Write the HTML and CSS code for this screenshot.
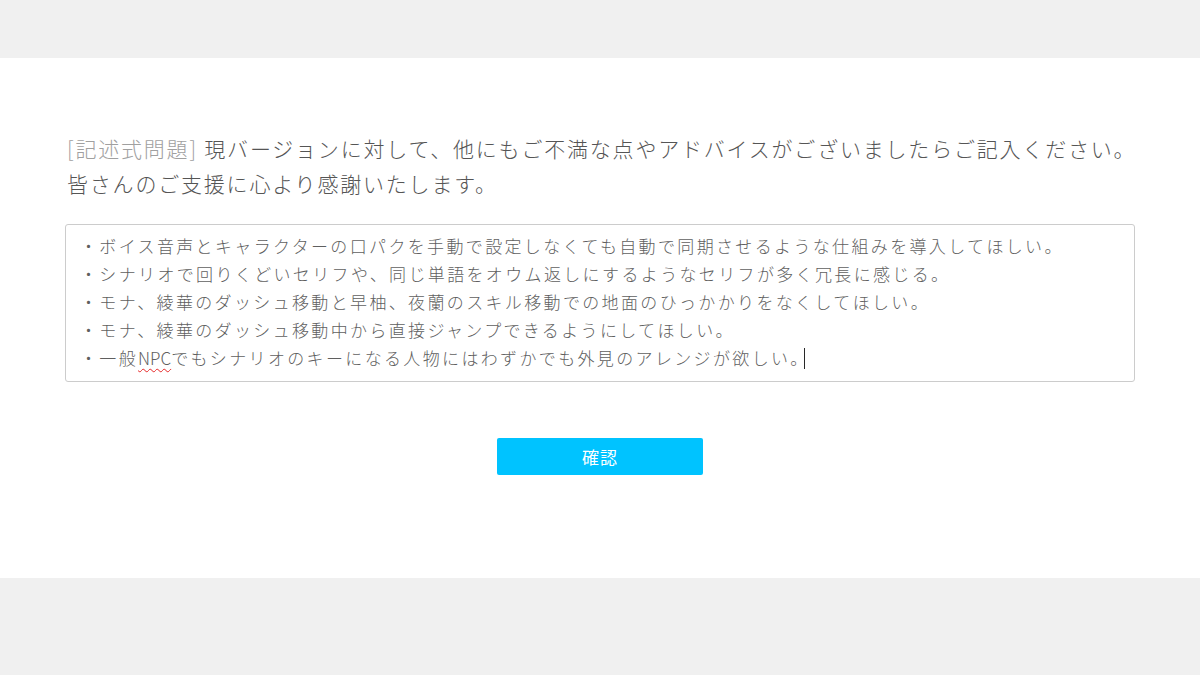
FILE: index.html
```html
<!DOCTYPE html>
<html>
  <head>
    <title>アンケート</title>
    <link rel="stylesheet" href="styles.css">
  </head>
  <body>
    <div class="top-band"></div>

    <div class="panel">
      <p class="question">
        <span class="question-tag">[記述式問題]</span> 現バージョンに対して、他にもご不満な点やアドバイスがございましたらご記入ください。<br>
        皆さんのご支援に心より感謝いたします。
      </p>

      <div class="answer-box">
        <p class="answer-line">・ボイス音声とキャラクターの口パクを手動で設定しなくても自動で同期させるような仕組みを導入してほしい。</p>
        <p class="answer-line">・シナリオで回りくどいセリフや、同じ単語をオウム返しにするようなセリフが多く冗長に感じる。</p>
        <p class="answer-line">・モナ、綾華のダッシュ移動と早柚、夜蘭のスキル移動での地面のひっかかりをなくしてほしい。</p>
        <p class="answer-line">・モナ、綾華のダッシュ移動中から直接ジャンプできるようにしてほしい。</p>
        <p class="answer-line">・一般<span class="spell-error">NPC</span>でもシナリオのキーになる人物にはわずかでも外見のアレンジが欲しい。<span class="caret"></span></p>
      </div>

      <div class="button-row">
        <button class="confirm-button">確認</button>
      </div>
    </div>
  </body>
</html>
```

FILE: styles.css
```css
body {
  margin: 0;
  background-color: rgb(240, 240, 240);
  font-family: "Noto Sans CJK JP", "Noto Sans", sans-serif;
}

.top-band {
  height: 58px;
}

.panel {
  height: 520px;
  background-color: white;
  padding: 0 65px;
  box-sizing: border-box;
  overflow: hidden;
}

.question {
  margin: 0;
  padding-top: 73px;
  padding-left: 2px;
  font-size: 21px;
  font-weight: 300;
  line-height: 35px;
  letter-spacing: 1.8px;
  color: rgb(85, 85, 85);
  white-space: nowrap;
}

.question-tag {
  color: rgb(160, 160, 160);
}

.answer-box {
  margin-top: 23px;
  height: 158px;
  box-sizing: border-box;
  border: 1px solid rgb(204, 204, 204);
  border-radius: 3px;
  padding: 7px 14px;
}

.answer-line {
  margin: 0;
  font-size: 17px;
  font-weight: 300;
  line-height: 28px;
  letter-spacing: 2.35px;
  color: rgb(95, 95, 95);
  white-space: nowrap;
}

.spell-error {
  letter-spacing: 0;
  text-decoration: underline wavy rgb(230, 40, 40);
  text-decoration-thickness: 1px;
  text-underline-offset: 3px;
}

.caret {
  display: inline-block;
  width: 1px;
  height: 21px;
  margin-left: -6px;
  background-color: rgb(40, 40, 40);
  vertical-align: -4px;
}

.button-row {
  display: flex;
  justify-content: center;
  margin-top: 56px;
}

.confirm-button {
  width: 206px;
  height: 37px;
  border: none;
  border-radius: 2px;
  background-color: rgb(0, 195, 255);
  color: white;
  font-family: "Noto Sans CJK JP", sans-serif;
  font-size: 17px;
  letter-spacing: 1px;
  cursor: pointer;
}
```
